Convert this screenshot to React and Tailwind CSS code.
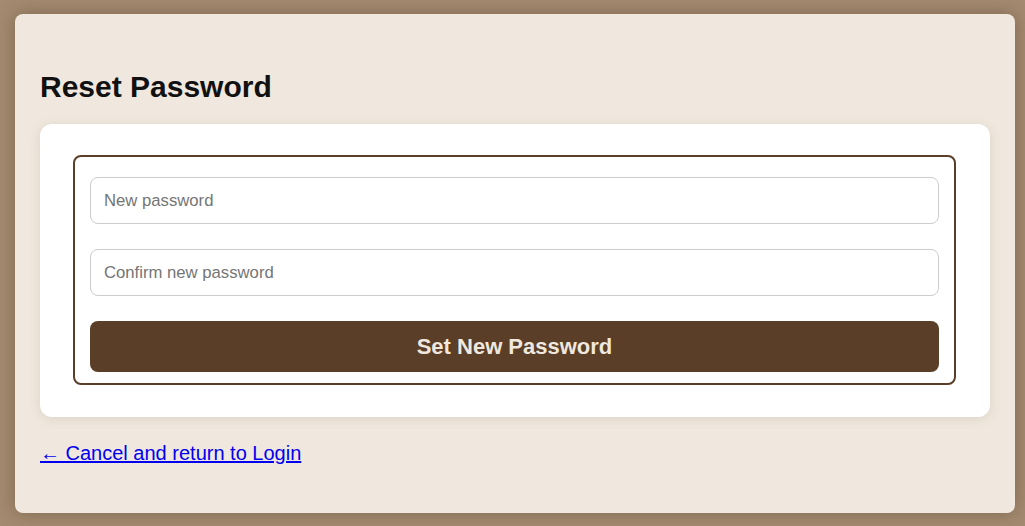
export default function App() {
  return (
    <div
      className="min-h-screen w-full bg-[#a38a70] pt-[14px] pl-[15px]"
      style={{ fontFamily: '"Liberation Sans", Arial, sans-serif' }}
    >
      <div className="flex h-[499px] w-[1000px] flex-col rounded-[8px] bg-[#f0e8de] px-[25px] pt-[55px] shadow-[0_0_18px_rgba(60,40,20,0.35)]">
        <h1 className="mb-[19px] text-[30px] font-bold leading-[36px] text-[#111]">
          Reset Password
        </h1>

        <div className="rounded-[12px] bg-white pt-[31px] pb-[32px] pl-[33px] pr-[34px] shadow-[0_2px_12px_rgba(90,62,40,0.12)]">
          <form
            className="flex flex-col rounded-[8px] border-2 border-[#5a3e28] px-[15px] pt-[20px] pb-[11px]"
            onSubmit={(e) => e.preventDefault()}
          >
            <input
              type="password"
              placeholder="New password"
              className="h-[47px] w-full rounded-[8px] border border-[#cccccc] bg-white px-[13px] text-[16.7px] text-[#222] outline-none placeholder:text-[#757575]"
            />
            <input
              type="password"
              placeholder="Confirm new password"
              className="mt-[25px] h-[47px] w-full rounded-[8px] border border-[#cccccc] bg-white px-[13px] text-[16.7px] text-[#222] outline-none placeholder:text-[#757575]"
            />
            <button
              type="submit"
              className="mt-[25px] h-[51px] w-full rounded-[8px] bg-[#5a3e28] text-[22px] font-bold text-[#f0e8de]"
            >
              Set New Password
            </button>
          </form>
        </div>

        <div className="mt-[24px] leading-[24px]">
          <a href="#" className="text-[20px] text-[#0000ee] underline">
            ← Cancel and return to Login
          </a>
        </div>
      </div>
    </div>
  );
}
